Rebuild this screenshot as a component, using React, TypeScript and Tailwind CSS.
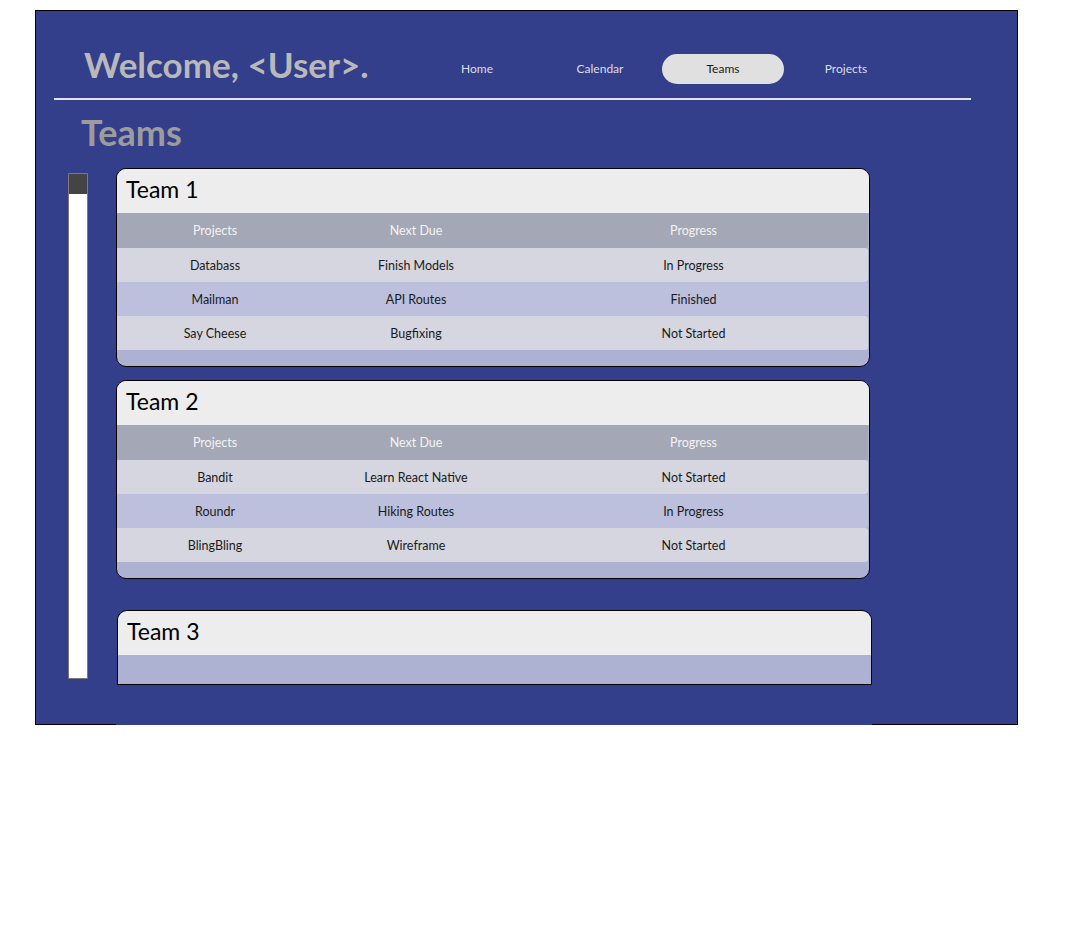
import React from "react";

type Row = [string, string, string];

const teams: { name: string; rows: Row[] }[] = [
  {
    name: "Team 1",
    rows: [
      ["Databass", "Finish Models", "In Progress"],
      ["Mailman", "API Routes", "Finished"],
      ["Say Cheese", "Bugfixing", "Not Started"],
    ],
  },
  {
    name: "Team 2",
    rows: [
      ["Bandit", "Learn React Native", "Not Started"],
      ["Roundr", "Hiking Routes", "In Progress"],
      ["BlingBling", "Wireframe", "Not Started"],
    ],
  },
];

function TeamCard({ name, rows }: { name: string; rows: Row[] }) {
  return (
    <div className="w-[754px] rounded-[10px] border border-black overflow-hidden bg-[#aeb2d2]">
      <div className="h-[44px] bg-[#ededed] flex items-center pl-[9px] pb-[3px] text-[23px] text-black leading-none">
        {name}
      </div>
      <div className="h-[35px] pt-[2px] mr-[1px] rounded-r-[3px] bg-[#a4a7b5] grid grid-cols-[196px_206px_1fr] items-center text-[12.5px] text-[#f4f4f4] text-center">
        <div>Projects</div>
        <div>Next Due</div>
        <div>Progress</div>
      </div>
      {rows.map((r, i) => (
        <div
          key={i}
          className={
            "h-[34px] pt-[2px] mr-[1px] rounded-r-[3px] grid grid-cols-[196px_206px_1fr] items-center text-[12.5px] text-[#1a1a1a] text-center " +
            (i % 2 === 1 ? "bg-[#bcc0dc]" : "bg-[#d6d6e0]")
          }
        >
          <div>{r[0]}</div>
          <div>{r[1]}</div>
          <div>{r[2]}</div>
        </div>
      ))}
      <div className="h-[16px]" />
    </div>
  );
}

export default function App() {
  return (
    <div
      className="bg-white w-[1082px] h-[925px] pt-[10px] pl-[35px]"
      style={{ fontFamily: "Lato, 'Noto Sans', sans-serif" }}
    >
      <div className="w-[983px] h-[715px] border border-black bg-[#333f8b] flex flex-col">
        {/* header */}
        <div className="h-[30px] mt-[43px] flex items-center pl-[48px]">
          <div className="w-[332px] mb-[10px] text-[35px] font-bold text-[#b9b9b9] leading-none whitespace-nowrap">
            Welcome, &lt;User&gt;.
          </div>
          <div className="flex gap-[1px] text-[12px]">
            {["Home", "Calendar", "Teams", "Projects"].map((n) => (
              <div
                key={n}
                className={
                  "w-[122px] h-[30px] flex items-center justify-center rounded-full " +
                  (n === "Teams" ? "bg-[#e0e0e0] text-[#1a1a1a]" : "text-[#dcdde6]")
                }
              >
                {n}
              </div>
            ))}
          </div>
        </div>
        <div className="mt-[14px] ml-[18px] w-[917px] h-[2px] bg-[#dfe1ef]" />
        <div className="mt-[12px] ml-[45px] h-[40px] flex items-center text-[36px] font-bold text-[#9c9c9c] leading-none">
          Teams
        </div>
        {/* content */}
        <div className="mt-[16px] flex flex-1">
          <div className="ml-[32px] mt-[5px] w-[20px] h-[506px] border border-[#7a7a7a] bg-white rounded-[1px]">
            <div className="h-[20px] bg-[#444444]" />
          </div>
          <div className="ml-[28px] w-[756px] relative -mb-[1px] bg-[#333f8b] flex flex-col">
            <div className="flex flex-col gap-[13px]">
              {teams.map((t) => (
                <TeamCard key={t.name} name={t.name} rows={t.rows} />
              ))}
            </div>
            <div className="mt-[31px] ml-[1px] w-[755px] rounded-t-[10px] border border-black overflow-hidden">
              <div className="h-[44px] bg-[#ededed] flex items-center pl-[9px] pb-[3px] text-[23px] text-black leading-none">
                Team 3
              </div>
              <div className="h-[29px] bg-[#aeb2d2]" />
            </div>
          </div>
        </div>
      </div>
    </div>
  );
}
